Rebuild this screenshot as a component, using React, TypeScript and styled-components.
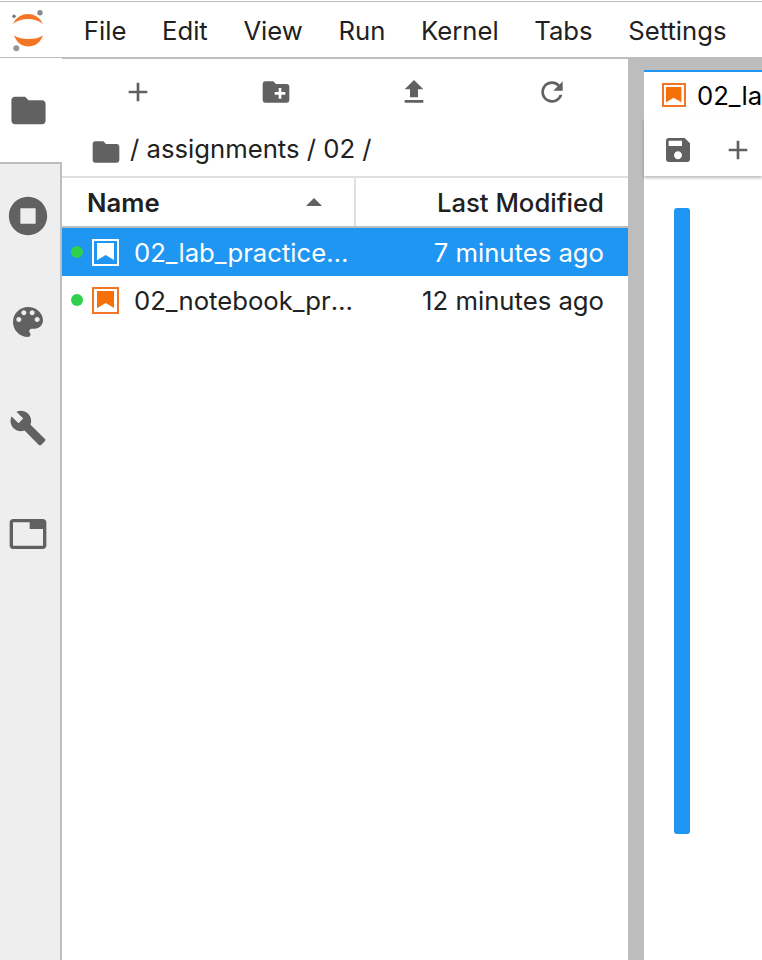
import styled, { createGlobalStyle } from "styled-components";

const GlobalStyle = createGlobalStyle`
  html, body {
    margin: 0;
    padding: 0;
    background: #fff;
    overflow: hidden;
  }
  * {
    box-sizing: border-box;
  }
`;

const Shell = styled.div`
  width: 762px;
  height: 960px;
  overflow: hidden;
  display: flex;
  flex-direction: column;
  background: #fff;
  color: #212121;
  font-family: Inter, "Liberation Sans", sans-serif;
  font-size: 25.7px;
`;

const MenuBar = styled.div`
  flex: none;
  height: 58px;
  margin-top: 1px;
  margin-bottom: -1px;
  display: flex;
  align-items: center;
  border-top: 1px solid #bdbdbd;
  border-bottom: 2px solid #bdbdbd;
`;

const LogoBox = styled.div`
  flex: none;
  width: 66px;
  height: 55px;
  padding-left: 10px;
  display: flex;
  align-items: center;
`;

const MenuItem = styled.div`
  flex: none;
  padding: 2px 17.8px 0;
  white-space: nowrap;
`;

const Body = styled.div`
  flex: 1;
  min-height: 0;
  display: flex;
`;

const SideBar = styled.div`
  flex: none;
  width: 62px;
  display: flex;
  flex-direction: column;
`;

const SideTab = styled.div<{ $active?: boolean }>`
  flex: none;
  height: ${(p) => (p.$active ? "104px" : "106px")};
  display: flex;
  align-items: center;
  justify-content: center;
  padding-right: 6px;
  color: #616161;
  background: ${(p) => (p.$active ? "#fff" : "#eeeeee")};
`;

const SideRest = styled.div`
  flex: 1;
  display: flex;
  flex-direction: column;
  border-top: 2px solid #bdbdbd;
  border-right: 2px solid #bdbdbd;
  background: #eeeeee;

  ${SideTab} {
    height: 106px;
    padding: 0 4px 2px 0;
  }
`;

const SideFill = styled.div`
  flex: 1;
`;

const FilePanel = styled.div`
  flex: none;
  width: 566px;
  display: flex;
  flex-direction: column;
`;

const FileToolbar = styled.div`
  flex: none;
  height: 70px;
  padding: 0 7px 2px;
  display: flex;
  align-items: center;
`;

const ToolButton = styled.div`
  flex: 1;
  display: flex;
  align-items: center;
  justify-content: center;
  color: #616161;
`;

const Crumbs = styled.div`
  flex: none;
  height: 48px;
  padding: 0 0 1px 28px;
  display: flex;
  align-items: center;
  gap: 8px;
  color: #616161;
`;

const CrumbText = styled.span`
  margin-top: -7px;
  color: #212121;
`;

const HeaderRow = styled.div`
  flex: none;
  height: 52px;
  display: flex;
  border-top: 2px solid #e0e0e0;
  border-bottom: 2px solid #bdbdbd;
`;

const NameHeader = styled.div`
  flex: none;
  width: 292px;
  padding: 0 32px 0 25px;
  display: flex;
  align-items: center;
  justify-content: space-between;
  font-weight: 600;
`;

const SortArrow = styled.span`
  width: 0;
  height: 0;
  border-left: 8px solid transparent;
  border-right: 8px solid transparent;
  border-bottom: 8px solid #616161;
`;

const ModifiedHeader = styled.div`
  flex: 1;
  padding-right: 24px;
  display: flex;
  align-items: center;
  justify-content: flex-end;
  border-left: 2px solid #e0e0e0;
  font-weight: 500;
`;

const FileRow = styled.div<{ $selected?: boolean }>`
  flex: none;
  height: 48px;
  display: flex;
  align-items: center;
  background: ${(p) => (p.$selected ? "#1f96f2" : "#fff")};
  color: ${(p) => (p.$selected ? "#fff" : "#212121")};
`;

const RunningDot = styled.span`
  flex: none;
  width: 12px;
  height: 12px;
  margin: 0 9px 0 9px;
  border-radius: 50%;
  background: #2fd14a;
`;

const NotebookMark = styled.span<{ $inverse?: boolean; $size: number }>`
  flex: none;
  width: ${(p) => p.$size}px;
  height: ${(p) => p.$size}px;
  display: flex;
  align-items: center;
  justify-content: center;
  border: 2px solid ${(p) => (p.$inverse ? "#fff" : "#f37626")};
  color: ${(p) => (p.$inverse ? "#fff" : "#f57009")};
`;

const FileName = styled.span`
  flex: none;
  width: 219px;
  margin-left: 15px;
  overflow: hidden;
  white-space: nowrap;
  text-overflow: ellipsis;
`;

const FileDate = styled.span`
  flex: 1;
  padding-right: 24px;
  text-align: right;
  white-space: nowrap;
`;

const Splitter = styled.div`
  flex: none;
  width: 16px;
  background: #bdbdbd;
`;

const MainArea = styled.div`
  flex: 1;
  min-width: 0;
  display: flex;
  flex-direction: column;
  background: #fff;
`;

const TabStrip = styled.div`
  flex: none;
  height: 14px;
  background: #bdbdbd;
  border-bottom: 2px solid #1f96f2;
`;

const DocTab = styled.div`
  flex: none;
  height: 46px;
  padding-left: 18px;
  display: flex;
  align-items: center;
  gap: 11px;
  color: #000;
  white-space: nowrap;
`;

const NotebookToolbar = styled.div`
  flex: none;
  height: 58px;
  padding: 6px 0 0 18px;
  display: flex;
  align-items: center;
  gap: 28px;
  color: #616161;
  box-shadow: 0 2px 3px rgba(0, 0, 0, 0.28);
`;

const CellArea = styled.div`
  flex: 1;
  padding: 32px 0 0 30px;
`;

const CollapserBar = styled.div`
  width: 16px;
  height: 626px;
  border-radius: 3px;
  background: #1f96f2;
`;

function Icon({ d, size }: { d: string; size: number }) {
  return (
    <svg width={size} height={size} viewBox="0 0 24 24" fill="currentColor" fillRule="evenodd">
      <path d={d} />
    </svg>
  );
}

const FOLDER = "M10 4H4c-1.1 0-2 .9-2 2v12c0 1.1.9 2 2 2h16c1.1 0 2-.9 2-2V8c0-1.1-.9-2-2-2h-8l-2-2z";
const STOP = "M12 2C6.48 2 2 6.48 2 12s4.48 10 10 10 10-4.48 10-10S17.52 2 12 2zM8 8h8v8H8z";
const PALETTE =
  "M12 3c-4.97 0-9 4.03-9 9s4.03 9 9 9c.83 0 1.5-.67 1.5-1.5 0-.39-.15-.74-.39-1.01-.23-.26-.38-.61-.38-.99 0-.83.67-1.5 1.5-1.5H16c2.76 0 5-2.24 5-5 0-4.42-4.03-8-9-8zm-5.5 9c-.83 0-1.5-.67-1.5-1.5S5.67 9 6.5 9 8 9.67 8 10.5 7.33 12 6.5 12zm3-4C8.67 8 8 7.33 8 6.5S8.67 5 9.5 5s1.5.67 1.5 1.5S10.33 8 9.5 8zm5 0c-.83 0-1.5-.67-1.5-1.5S13.67 5 14.5 5s1.5.67 1.5 1.5S15.33 8 14.5 8zm3 4c-.83 0-1.5-.67-1.5-1.5S16.67 9 17.5 9s1.5.67 1.5 1.5-.67 1.5-1.5 1.5z";
const WRENCH =
  "M22.7 19l-9.1-9.1c.9-2.3.4-5-1.5-6.9-2-2-5-2.4-7.4-1.3L9 6 6 9 1.6 4.7C.4 7.1.9 10.1 2.9 12.1c1.9 1.9 4.6 2.4 6.9 1.5l9.1 9.1c.4.4 1 .4 1.4 0l2.3-2.3c.5-.4.5-1.1.1-1.4z";
const TAB = "M21 3H3c-1.1 0-2 .9-2 2v14c0 1.1.9 2 2 2h18c1.1 0 2-.9 2-2V5c0-1.1-.9-2-2-2zm0 16H3V5h10v4h8v10z";
const ADD = "M19 13h-6v6h-2v-6H5v-2h6V5h2v6h6v2z";
const NEW_FOLDER =
  "M20 6h-8l-2-2H4c-1.11 0-1.99.89-1.99 2L2 18c0 1.11.89 2 2 2h16c1.11 0 2-.89 2-2V8c0-1.11-.89-2-2-2zm-1 8h-3v3h-2v-3h-3v-2h3V9h2v3h3v2z";
const UPLOAD = "M9 16h6v-6h4l-7-7-7 7h4zm-4 2h14v2H5z";
const REFRESH =
  "M17.65 6.35C16.2 4.9 14.21 4 12 4c-4.42 0-7.99 3.58-7.99 8s3.57 8 7.99 8c3.73 0 6.84-2.55 7.73-6h-2.08c-.82 2.33-3.04 4-5.65 4-3.31 0-6-2.69-6-6s2.69-6 6-6c1.66 0 3.14.69 4.22 1.78L13 11h7V4l-2.35 2.35z";
const SAVE =
  "M17 3H5c-1.11 0-2 .9-2 2v14c0 1.1.89 2 2 2h14c1.1 0 2-.9 2-2V7l-4-4zm-5 16c-1.66 0-3-1.34-3-3s1.34-3 3-3 3 1.34 3 3-1.34 3-3 3zm3-10H5V5h10v4z";

function Logo() {
  return (
    <svg width="36" height="46" viewBox="0 0 36 46">
      <path d="M3 17C9 3.7 27 3.7 33 17C25 10.3 11 10.3 3 17Z" fill="#f37626" />
      <path d="M4 28.5C11 33.2 26 33.2 33 28.5C28 43.2 9 43.2 4 28.5Z" fill="#f37626" />
      <circle cx="30" cy="5.8" r="2.7" fill="#8a8a8b" />
      <circle cx="6.3" cy="41.2" r="3" fill="#989798" />
      <circle cx="4" cy="9.2" r="1.7" fill="#767677" />
    </svg>
  );
}

function NotebookIcon({ inverse, size }: { inverse?: boolean; size: number }) {
  const inner = size * 0.64;
  return (
    <NotebookMark $inverse={inverse} $size={size}>
      <svg width={inner} height={inner} viewBox="0 0 18 18" fill="currentColor">
        <path d="M0 0H18V18L9 12.5L0 18Z" />
      </svg>
    </NotebookMark>
  );
}

export default function App() {
  return (
    <Shell>
      <GlobalStyle />
      <MenuBar>
        <LogoBox>
          <Logo />
        </LogoBox>
        {["File", "Edit", "View", "Run", "Kernel", "Tabs", "Settings"].map((item) => (
          <MenuItem key={item}>{item}</MenuItem>
        ))}
      </MenuBar>
      <Body>
        <SideBar>
          <SideTab $active>
            <Icon d={FOLDER} size={41} />
          </SideTab>
          <SideRest>
            <SideTab>
              <Icon d={STOP} size={46} />
            </SideTab>
            <SideTab>
              <Icon d={PALETTE} size={40} />
            </SideTab>
            <SideTab>
              <Icon d={WRENCH} size={38} />
            </SideTab>
            <SideTab>
              <Icon d={TAB} size={40} />
            </SideTab>
            <SideFill />
          </SideRest>
        </SideBar>
        <FilePanel>
          <FileToolbar>
            <ToolButton>
              <Icon d={ADD} size={32} />
            </ToolButton>
            <ToolButton>
              <Icon d={NEW_FOLDER} size={32} />
            </ToolButton>
            <ToolButton>
              <Icon d={UPLOAD} size={32} />
            </ToolButton>
            <ToolButton>
              <Icon d={REFRESH} size={32} />
            </ToolButton>
          </FileToolbar>
          <Crumbs>
            <Icon d={FOLDER} size={32} />
            <CrumbText>/ assignments / 02 /</CrumbText>
          </Crumbs>
          <HeaderRow>
            <NameHeader>
              Name
              <SortArrow />
            </NameHeader>
            <ModifiedHeader>Last Modified</ModifiedHeader>
          </HeaderRow>
          <FileRow $selected>
            <RunningDot />
            <NotebookIcon inverse size={27} />
            <FileName>02_lab_practice.ipynb</FileName>
            <FileDate>7 minutes ago</FileDate>
          </FileRow>
          <FileRow>
            <RunningDot />
            <NotebookIcon size={27} />
            <FileName>02_notebook_practice.ipynb</FileName>
            <FileDate>12 minutes ago</FileDate>
          </FileRow>
        </FilePanel>
        <Splitter />
        <MainArea>
          <TabStrip />
          <DocTab>
            <NotebookIcon size={24} />
            02_lab_practice.ipynb
          </DocTab>
          <NotebookToolbar>
            <Icon d={SAVE} size={32} />
            <Icon d={ADD} size={32} />
          </NotebookToolbar>
          <CellArea>
            <CollapserBar />
          </CellArea>
        </MainArea>
      </Body>
    </Shell>
  );
}
